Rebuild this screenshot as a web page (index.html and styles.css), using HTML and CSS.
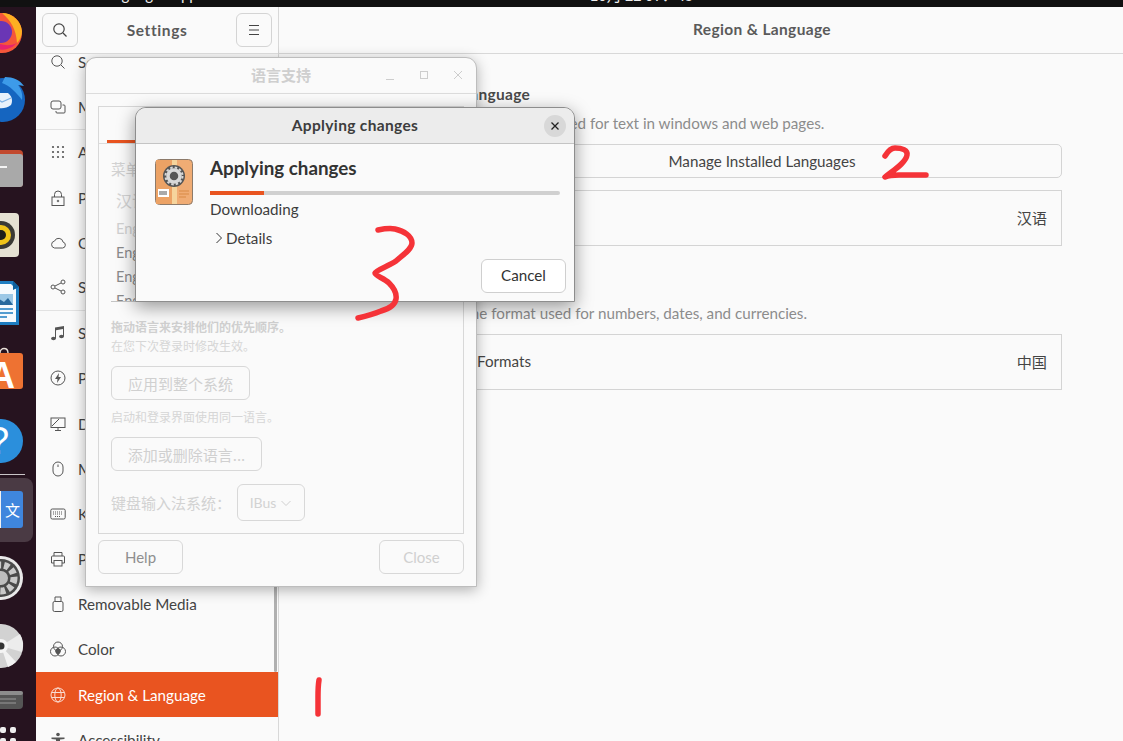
FILE: index.html
```html
<!DOCTYPE html>
<html>
<head>
  <meta charset="utf-8" />
  <title>Region &amp; Language</title>
  <link rel="stylesheet" href="styles.css">
</head>
<body>
  <div class="topbar">
    <div class="topbar-text">
      <span class="app-name">Language Support</span>
      <span class="clock">10月 22 07：45</span>
    </div>
  </div>
  <div class="desktop">
    <!-- dock, cropped on the left like the capture -->
    <nav class="dock">
      <svg class="dock-icon" width="36" height="68" viewBox="0 0 36 68">
        <circle cx="2" cy="34" r="20" fill="#f5563a"/>
        <path d="M2 14a20 20 0 0 1 20 18c0 5-2 9-5 12-1-14-6-22-15-30z" fill="#fdb022"/>
        <circle cx="1" cy="33" r="11" fill="#6a36b5"/>
        <path d="M-3 50a20 20 0 0 0 20-6c-6 3-13 3-20 0z" fill="#e8236e"/>
      </svg>
      <svg class="dock-icon" width="36" height="68" viewBox="0 0 36 68">
        <circle cx="3" cy="33" r="22" fill="#1565c0"/>
        <path d="M5 10c8 0 15 3 19 9l-6-1c3 4 5 9 4 15-6-8-12-14-20-17z" fill="#3d9be9"/>
        <path d="M-6 26h14c4 3 5 8 3 12-5 4-11 4-17 2z" fill="#e8f1fb"/>
        <path d="M-6 30l8 5 9-4" fill="none" stroke="#7fb2e5" stroke-width="1.2"/>
      </svg>
      <svg class="dock-icon" width="36" height="68" viewBox="0 0 36 68">
        <rect x="-20" y="15" width="43" height="37" rx="4" fill="#c2492e"/>
        <rect x="-20" y="19" width="43" height="33" rx="3" fill="#a9a9a9"/>
        <rect x="0" y="31" width="7" height="2" fill="#f4f4f4"/>
      </svg>
      <svg class="dock-icon" width="36" height="68" viewBox="0 0 36 68">
        <rect x="-20" y="10" width="39" height="44" rx="4" fill="#e5e1d3"/>
        <circle cx="1" cy="32" r="14" fill="#3a3a36"/>
        <circle cx="1" cy="32" r="10" fill="#f0c419"/>
        <circle cx="1" cy="32" r="5" fill="#1c1c1a"/>
      </svg>
      <svg class="dock-icon" width="36" height="68" viewBox="0 0 36 68">
        <path d="M-10 10h23l6 6v38h-29z" fill="#1d7dc1"/>
        <path d="M-10 13h21l5 5v33h-26z" fill="#f6fafd"/>
        <path d="M13 10l6 6-6 3z" fill="#0d5f9c"/>
        <rect x="-8" y="23" width="21" height="11" fill="#9cc8e6"/>
        <path d="M-8 34l7-6 5 3 4-4 5 7z" fill="#27699d"/>
        <path d="M-8 38h21M-8 42h21M-8 46h15" stroke="#1d7dc1" stroke-width="1.6"/>
      </svg>
      <svg class="dock-icon" width="36" height="68" viewBox="0 0 36 68">
        <path d="M0 14c0-6 8-6 8 0" fill="none" stroke="#e8dfd8" stroke-width="1.4"/>
        <rect x="-20" y="14" width="43" height="36" rx="3" fill="#ee7232"/>
        <text x="-11" y="49" class="store-letter">A</text>
      </svg>
      <svg class="dock-icon" width="36" height="68" viewBox="0 0 36 68">
        <circle cx="1" cy="34" r="22" fill="#2b8fdc"/>
        <text x="-12" y="47" class="help-letter">?</text>
      </svg>
      <div class="dock-sep"></div>
      <div class="dock-active">
        <svg width="36" height="64" viewBox="0 0 36 64">
          <rect x="-20" y="13" width="43" height="37" rx="3" fill="#3f86dd"/>
          <rect x="-20" y="13" width="21" height="37" fill="#f2f2f2"/>
          <text x="5" y="38" class="lang-letter">文</text>
        </svg>
      </div>
      <svg class="dock-icon" width="36" height="68" viewBox="0 0 36 68">
        <circle cx="1" cy="34" r="22" fill="#e9e9e9"/>
        <circle cx="1" cy="34" r="19" fill="#4a4a4a"/>
        <circle cx="1" cy="34" r="13" fill="none" stroke="#c9c9c9" stroke-width="7" stroke-dasharray="5 3"/>
        <circle cx="1" cy="34" r="7" fill="#bdbdbd"/>
      </svg>
      <svg class="dock-icon" width="36" height="68" viewBox="0 0 36 68">
        <circle cx="1" cy="34" r="22" fill="#d2d2d2"/>
        <path d="M1 34L20 22A22 22 0 0 1 22 40z" fill="#ececec"/>
        <path d="M1 34L8 55A22 22 0 0 0 16 50z" fill="#f2f2f2"/>
        <circle cx="1" cy="34" r="7" fill="#f4f4f4"/>
        <circle cx="1" cy="34" r="3.5" fill="#333"/>
      </svg>
      <svg class="dock-icon" width="36" height="36" viewBox="0 0 36 36">
        <rect x="-20" y="11" width="43" height="18" rx="4" fill="#555"/>
        <rect x="-20" y="11" width="43" height="4" rx="2" fill="#8c8c8c"/>
        <path d="M0 19h16M0 23h16" stroke="#9a9a9a"/>
      </svg>
      <svg class="dock-icon" width="36" height="30" viewBox="0 0 36 30">
        <rect x="0" y="11" width="6" height="6" rx="2" fill="#eee"/>
        <rect x="10" y="11" width="6" height="6" rx="2" fill="#eee"/>
        <rect x="0" y="22" width="6" height="6" rx="2" fill="#eee"/>
        <rect x="10" y="22" width="6" height="6" rx="2" fill="#eee"/>
      </svg>
    </nav>

    <div class="settings">
      <aside class="sidebar">
        <header class="side-header">
          <button class="head-btn">
            <svg width="16" height="16" viewBox="0 0 16 16"><circle cx="7" cy="7" r="5.2"/><path d="M11 11l3.5 3.5"/></svg>
          </button>
          <span class="side-title">Settings</span>
          <button class="head-btn">
            <svg width="16" height="16" viewBox="0 0 16 16"><path d="M3 3.5h10M3 8h10M3 12.5h10"/></svg>
          </button>
        </header>
        <ul class="side-list">
          <li class="side-row"><svg viewBox="0 0 16 16"><circle cx="7" cy="7" r="5.2"/><path d="M11 11l3.5 3.5"/></svg>Search</li>
          <li class="side-row sep"><svg viewBox="0 0 16 16"><rect x="1" y="2" width="10" height="8" rx="2"/><path d="M12.5 6h1.500a1 1 0 0 1 1 1v6a1 1 0 0 1-1 1H7a1 1 0 0 1-1-1v-1"/></svg>Multitasking</li>
          <li class="side-row"><svg viewBox="0 0 16 16" class="solid"><circle cx="3" cy="3" r="1.1"/><circle cx="8" cy="3" r="1.1"/><circle cx="13" cy="3" r="1.1"/><circle cx="3" cy="8" r="1.1"/><circle cx="8" cy="8" r="1.1"/><circle cx="13" cy="8" r="1.1"/><circle cx="3" cy="13" r="1.1"/><circle cx="8" cy="13" r="1.1"/><circle cx="13" cy="13" r="1.1"/></svg>Appearance</li>
          <li class="side-row"><svg viewBox="0 0 16 16"><rect x="2" y="7" width="12" height="8.5"/><path d="M4.500 7V4.500a3.500 3.500 0 0 1 7 0V7"/><circle cx="8" cy="11" r=".8"/></svg>Privacy</li>
          <li class="side-row"><svg viewBox="0 0 16 16"><path d="M4.500 13h8a3 3 0 0 0 .6-5.900 4.500 4.500 0 0 0-8.600-1A3.500 3.500 0 0 0 4.500 13z"/></svg>Online Accounts</li>
          <li class="side-row sep"><svg viewBox="0 0 16 16"><circle cx="3" cy="8" r="2"/><circle cx="13" cy="3" r="2"/><circle cx="13" cy="13" r="2"/><path d="M5 7l6-3M5 9l6 3"/></svg>Sharing</li>
          <li class="side-row"><svg viewBox="0 0 16 16" class="solid"><path d="M5 2.500l9-1.500v10.500h-1V4l-7 1.200V13.500H5z"/><ellipse cx="3.500" cy="13.500" rx="2.400" ry="1.800"/><ellipse cx="11.500" cy="11.500" rx="2.400" ry="1.800"/></svg>Sound</li>
          <li class="side-row"><svg viewBox="0 0 16 16"><circle cx="8" cy="8" r="7"/><path class="fill" d="M9 3L5 9h2.500L7 13l4-6H8.500z"/></svg>Power</li>
          <li class="side-row"><svg viewBox="0 0 16 16"><rect x="1" y="2" width="14" height="9.500"/><path d="M8 11.500V14M5 14.500h6M2 10l7-7"/></svg>Displays</li>
          <li class="side-row"><svg viewBox="0 0 16 16"><rect x="3" y="1" width="10" height="14" rx="5"/><path d="M8 3.500v2.500"/></svg>Mouse &amp; Touchpad</li>
          <li class="side-row"><svg viewBox="0 0 16 16"><rect x=".8" y="3" width="14.400" height="10" rx="1.500"/><path d="M3 6h10M3 8h10M5 10.500h6" stroke-dasharray="1 1"/></svg>Keyboard</li>
          <li class="side-row"><svg viewBox="0 0 16 16"><path d="M4 5V1.500h8V5M4 12H1.500V6a1 1 0 0 1 1-1h11a1 1 0 0 1 1 1v6H12"/><rect x="4" y="9.500" width="8" height="5.500"/></svg>Printers</li>
          <li class="side-row"><svg viewBox="0 0 16 16"><rect x="3" y="5.500" width="10" height="10" rx="1.500"/><path d="M5 5.500V1h6v4.500M7 3h.1M9 3h.1"/></svg>Removable Media</li>
          <li class="side-row"><svg viewBox="0 0 16 16"><circle cx="8" cy="5.500" r="4.500"/><circle cx="5" cy="10.500" r="4.500"/><circle cx="11" cy="10.500" r="4.500"/><path class="fill" d="M8 7a4.500 4.500 0 0 1 3 3 4.500 4.500 0 0 1-3 3.500 4.500 4.500 0 0 1-3-3.500 4.500 4.500 0 0 1 3-3z"/></svg>Color</li>
          <li class="side-row active"><svg viewBox="0 0 16 16"><circle cx="8" cy="8" r="7"/><ellipse cx="8" cy="8" rx="3.200" ry="7"/><path d="M1.500 5.500h13M1.500 10.500h13"/></svg>Region &amp; Language</li>
          <li class="side-row"><svg viewBox="0 0 16 16" class="solid"><circle cx="8" cy="2.500" r="1.800"/><path d="M1.500 5.500h13v1.400l-4.500.6V11l1.500 4.500H10L8 11.500 6 15.500H4.500L6 11V7.500l-4.500-.6z"/></svg>Accessibility</li>
        </ul>
        <div class="side-scroll"></div>
      </aside>

      <main class="panel">
        <header class="panel-header">Region &amp; Language</header>
        <div class="panel-body">
          <h2 class="section-title">Language</h2>
          <p class="section-desc">The language used for text in windows and web pages.</p>
          <div class="manage-btn">Manage Installed Languages</div>
          <div class="pref-row"><span>Language</span><span class="cjk">汉语</span></div>
          <h2 class="section-title second">Formats</h2>
          <p class="section-desc">The format used for numbers, dates, and currencies.</p>
          <div class="pref-row"><span>Formats</span><span class="cjk">中国</span></div>
        </div>
      </main>
    </div>

    <!-- language support window, dimmed because the dialog is modal -->
    <section class="lang-window">
      <header class="lang-titlebar">
        <span class="lang-title cjk">语言支持</span>
        <div class="win-controls">
          <svg width="12" height="12" viewBox="0 0 12 12"><path d="M2 10.500h8"/></svg>
          <svg width="12" height="12" viewBox="0 0 12 12"><rect x="2.500" y="2.500" width="7" height="7"/></svg>
          <svg width="12" height="12" viewBox="0 0 12 12"><path d="M2 2l8 8M10 2l-8 8"/></svg>
        </div>
      </header>
      <div class="lang-body">
        <div class="notebook">
          <div class="tabs"><span class="tab cjk">语言</span></div>
          <div class="tab-page cjk">
            <p class="menu-label">菜单和窗口的语言：</p>
            <ul class="lang-list">
              <li class="lang-first">汉语（中国）</li>
              <li class="pale">English</li>
              <li>English (Australia)</li>
              <li>English (Canada)</li>
              <li>English (United Kingdom)</li>
            </ul>
            <p class="hint strong">拖动语言来安排他们的优先顺序。</p>
            <p class="hint">在您下次登录时修改生效。</p>
            <div class="dim-btn wide">应用到整个系统</div>
            <p class="hint after">启动和登录界面使用同一语言。</p>
            <div class="dim-btn wider">添加或删除语言...</div>
            <div class="ime-row">
              <span>键盘输入法系统：</span>
              <div class="ime-select">IBus
                <svg width="12" height="12" viewBox="0 0 12 12"><path d="M1.500 4l4.500 4.500L10.500 4"/></svg>
              </div>
            </div>
          </div>
        </div>
        <div class="lang-actions">
          <div class="dim-btn action help">Help</div>
          <div class="dim-btn action">Close</div>
        </div>
      </div>
    </section>

    <!-- progress dialog -->
    <section class="apply-dialog">
      <header class="apply-titlebar">
        <span>Applying changes</span>
        <span class="apply-close">
          <svg width="10" height="10" viewBox="0 0 10 10"><path d="M1.500 1.500l7 7M8.500 1.500l-7 7"/></svg>
        </span>
      </header>
      <div class="apply-body">
        <svg class="pkg-icon" width="38" height="46" viewBox="0 0 38 46">
          <rect x=".5" y=".5" width="37" height="45" rx="4" fill="#f0ac74" stroke="#8c7a6a"/>
          <rect x="1" y="1" width="18" height="44" fill="#eca265"/>
          <rect x="17" y="1" width="5" height="44" fill="#f6d49c"/>
          <circle cx="19" cy="17" r="11" fill="#555"/>
          <circle cx="19" cy="17" r="6" fill="none" stroke="#d8d8d8" stroke-width="3.500"/>
          <circle cx="19" cy="17" r="8.500" fill="none" stroke="#d8d8d8" stroke-width="2" stroke-dasharray="2.500 2"/>
          <rect x="3" y="30" width="11" height="8" fill="#fff"/>
          <path d="M5 32v4M7 32v4M9 32v4M11 32v4" stroke="#555"/>
          <path d="M24 32h10M24 35h10M24 38h7" stroke="#d98a45"/>
        </svg>
        <div class="apply-main">
          <h1 class="apply-heading">Applying changes</h1>
          <div class="progress"><div class="progress-fill"></div></div>
          <p class="apply-status">Downloading</p>
          <div class="details">
            <svg width="8" height="12" viewBox="0 0 8 12"><path d="M1.500 1l5 5-5 5"/></svg>
            Details
          </div>
        </div>
      </div>
      <div class="apply-actions"><button class="cancel-btn">Cancel</button></div>
    </section>

    <!-- hand drawn red numbers -->
    <svg class="scribble" width="1123" height="741" viewBox="0 0 1123 741">
      <path d="M319 680c-1 6-1 10-1 17 0 6 0 11 0 17"/>
      <path d="M885 156c3-5 6-8 10-8 7 0 13 2 12 7-1 8-15 16-22 22 4-2 9-2 14-2l27 0"/>
      <path d="M378 230c5-1 12-2 17-1 9 2 17 7 17 14 0 6-9 12-16 18-7 5-20 9-21 12 0 3 9 5 14 10 5 5 8 10 7 16-1 6-8 10-15 12-7 3-14 5-23 7"/>
    </svg>
  </div>
</body>
</html>
```

FILE: styles.css
```css
html, body {
  margin: 0;
  padding: 0;
  width: 1123px;
  height: 741px;
  overflow: hidden;
}
body {
  font-family: "Lato", "Noto Sans CJK SC", sans-serif;
  font-size: 15.2px;
  color: #3d3d3d;
  background: #fafafa;
  display: flex;
  flex-direction: column;
}
p, h1, h2, ul {
  margin: 0;
  padding: 0;
  list-style: none;
}
.cjk {
  font-family: "Noto Sans CJK SC", sans-serif;
}

/* top bar, only the descenders are in the capture */
.topbar {
  height: 7px;
  flex: none;
  background: #111;
  overflow: hidden;
}
.topbar-text {
  display: flex;
  margin-top: -15px;
  color: #eee;
  font-size: 15px;
  line-height: 18px;
  white-space: nowrap;
}
.app-name {
  width: 590px;
  padding-left: 98px;
  box-sizing: border-box;
}
.clock {
  padding-top: 1px;
  font-family: "Noto Sans CJK SC", sans-serif;
}

.desktop {
  flex: 1;
  display: flex;
  position: relative;
  min-height: 0;
  overflow: hidden;
}

/* dock */
.dock {
  flex: none;
  width: 36px;
  background: #26131f;
  display: flex;
  flex-direction: column;
  margin-top: -8px;
  overflow: hidden;
}
.dock-icon {
  flex: none;
  display: block;
}
.dock-sep {
  flex: none;
  width: 25px;
  height: 1px;
  margin: -1px 0 3px;
  background: #c9c4c7;
}
.dock-active {
  flex: none;
  width: 33px;
  height: 64px;
  border-radius: 0 8px 8px 0;
  background: #4a3a44;
  overflow: hidden;
  margin-bottom: 2px;
}
.store-letter {
  font: bold 36px "Liberation Sans", sans-serif;
  fill: #fff;
}
.help-letter {
  font: 38px "Liberation Sans", sans-serif;
  fill: #fff;
}
.lang-letter {
  font: 15px "Noto Sans CJK SC", sans-serif;
  fill: #fff;
}

/* settings window */
.settings {
  flex: 1;
  display: flex;
  min-width: 0;
}
.sidebar {
  flex: none;
  width: 242px;
  border-right: 1px solid #d8d8d8;
  overflow: hidden;
  position: relative;
}
.side-header {
  height: 47px;
  box-sizing: border-box;
  border-bottom: 1px solid #d8d8d8;
  background: #fafafa;
  padding: 6px 6px 6px;
  display: flex;
  align-items: center;
  justify-content: space-between;
  position: relative;
  z-index: 1;
}
.side-title {
  font-weight: bold;
  font-size: 15.5px;
  letter-spacing: 0.6px;
  color: #5a5a5a;
  margin-top: -1px;
}
.head-btn {
  width: 36px;
  height: 34px;
  padding: 0;
  background: #fafafa;
  border: 1px solid #d4d4d4;
  border-radius: 6px;
  display: flex;
  align-items: center;
  justify-content: center;
}
.head-btn svg {
  fill: none;
  stroke: #444;
  stroke-width: 1.2;
}
.side-list {
  margin-top: -14.6px;
}
.side-row {
  height: 45.2px;
  box-sizing: border-box;
  padding-left: 14px;
  display: flex;
  align-items: center;
  gap: 12px;
  color: #444;
  white-space: nowrap;
}
.side-row.sep {
  border-bottom: 1px solid #e2e2e2;
}
.side-row svg {
  flex: none;
  width: 16px;
  height: 16px;
  fill: none;
  stroke: #555;
  stroke-width: 1;
}
.side-row svg.solid {
  fill: #555;
  stroke: none;
}
.side-row svg .fill {
  fill: #555;
  stroke: none;
}
.side-row.active {
  background: #e95420;
  color: #fff;
}
.side-row.active svg {
  stroke: #fff;
  opacity: 0.8;
}
.side-scroll {
  position: absolute;
  right: 1px;
  bottom: 69px;
  width: 3px;
  height: 220px;
  background: #b0b0b0;
  border-radius: 2px;
}

/* right panel, runs past the edge of the capture */
.panel {
  flex: none;
  width: 966px;
}
.panel-header {
  height: 47px;
  box-sizing: border-box;
  padding-bottom: 2px;
  border-bottom: 1px solid #d8d8d8;
  display: flex;
  align-items: center;
  justify-content: center;
  font-weight: bold;
  font-size: 15.5px;
  letter-spacing: 0.35px;
  color: #5a5a5a;
}
.panel-body {
  width: 600px;
  margin: 0 auto;
  padding-top: 30px;
}
.section-title {
  font-size: 15.5px;
  line-height: 20px;
  letter-spacing: 0.3px;
  font-weight: bold;
  color: #4a4a4a;
}
.section-title.second {
  margin-top: 28px;
}
.section-desc {
  margin-top: 9px;
  line-height: 20px;
  color: #8c8c8c;
}
.manage-btn {
  margin-top: 11px;
  height: 34px;
  box-sizing: border-box;
  padding-bottom: 1px;
  border: 1px solid #d4d4d4;
  border-radius: 5px;
  display: flex;
  align-items: center;
  justify-content: center;
  color: #444;
}
.pref-row {
  margin-top: 12px;
  height: 56px;
  box-sizing: border-box;
  border: 1px solid #d4d4d4;
  padding: 0 14px 3px;
  display: flex;
  align-items: center;
  justify-content: space-between;
  color: #444;
}
.section-desc + .pref-row {
  margin-top: 11px;
}

/* language support window */
.lang-window {
  position: absolute;
  left: 85px;
  top: 50px;
  width: 392px;
  height: 530px;
  box-sizing: border-box;
  background: #fafafa;
  border: 1px solid #bdbdbd;
  border-radius: 11px 11px 0 0;
  box-shadow: 0 3px 14px rgba(0, 0, 0, 0.3);
  display: flex;
  flex-direction: column;
}
.lang-titlebar {
  height: 35px;
  flex: none;
  border-bottom: 1px solid #dcdcdc;
  display: flex;
  align-items: center;
  justify-content: center;
  position: relative;
}
.lang-title {
  font-size: 15px;
  font-weight: bold;
  color: #cfcfcf;
  margin-top: -3px;
}
.win-controls {
  position: absolute;
  right: 12px;
  top: 11px;
  display: flex;
  gap: 22px;
}
.win-controls svg {
  fill: none;
  stroke: #cdcdcd;
}
.lang-body {
  flex: 1;
  padding: 12px 12px 12px;
  display: flex;
  flex-direction: column;
  color: #d2d2d2;
}
.notebook {
  height: 428px;
  flex: none;
  box-sizing: border-box;
  border: 1px solid #d8d8d8;
}
.tabs {
  height: 37px;
  box-sizing: border-box;
  border-bottom: 1px solid #dcdcdc;
  padding: 0 8px;
}
.tab {
  display: block;
  width: 90px;
  height: 36px;
  box-sizing: border-box;
  text-align: center;
  line-height: 36px;
  font-size: 15px;
  border-bottom: 3px solid #e95420;
  color: #cfcfcf;
}
.tab-page {
  padding: 13px 12px 0;
  font-size: 12px;
  font-family: "Noto Sans CJK SC", sans-serif;
}
.menu-label {
  font-size: 14.5px;
  line-height: 24px;
}
.lang-list {
  margin: 3px 0 0;
  border-bottom: 1px solid #c4c4c4;
  height: 117px;
  overflow: hidden;
  font-family: "Lato", sans-serif;
  font-size: 14.5px;
  color: #8a8a8a;
}
.lang-list li {
  height: 24px;
  line-height: 24px;
  padding-left: 5px;
}
.lang-list li.pale {
  color: #d0d0d0;
}
.lang-list li.lang-first {
  height: 33px;
  line-height: 33px;
  font-family: "Noto Sans CJK SC", sans-serif;
  font-size: 16px;
  color: #d4d4d4;
}
.hint {
  line-height: 19px;
  color: #d6d6d6;
}
.hint.strong {
  margin-top: 15px;
  font-weight: bold;
  color: #d0d0d0;
}
.hint.after {
  margin-top: 7px;
}
.dim-btn {
  height: 34px;
  box-sizing: border-box;
  border: 1px solid #d8d8d8;
  border-radius: 6px;
  display: flex;
  align-items: center;
  justify-content: center;
  font-size: 15px;
  color: #d0d0d0;
}
.dim-btn.wide {
  width: 139px;
  margin-top: 11px;
}
.dim-btn.wider {
  width: 151px;
  margin-top: 11px;
}
.ime-row {
  margin-top: 13px;
  display: flex;
  align-items: center;
  gap: 6px;
  font-size: 15px;
}
.ime-select {
  width: 68px;
  height: 37px;
  box-sizing: border-box;
  border: 1px solid #d8d8d8;
  border-radius: 6px;
  display: flex;
  align-items: center;
  justify-content: center;
  gap: 4px;
  font-family: "Lato", sans-serif;
  font-size: 14px;
}
.ime-select svg {
  fill: none;
  stroke: #d0d0d0;
}
.lang-actions {
  margin-top: 6px;
  display: flex;
  justify-content: space-between;
}
.dim-btn.action {
  width: 85px;
  font-family: "Lato", sans-serif;
  font-size: 15px;
}
.dim-btn.help {
  color: #8f8f8f;
}

/* applying changes dialog */
.apply-dialog {
  position: absolute;
  left: 135px;
  top: 100px;
  width: 440px;
  height: 195px;
  box-sizing: border-box;
  background: #fafafa;
  border: 1px solid #8d8d8d;
  border-radius: 11px 11px 0 0;
  box-shadow: 0 5px 18px rgba(0, 0, 0, 0.4);
  display: flex;
  flex-direction: column;
}
.apply-titlebar {
  height: 36px;
  flex: none;
  box-sizing: border-box;
  padding-bottom: 2px;
  background: #ececec;
  border-bottom: 1px solid #c4c4c4;
  border-radius: 10px 10px 0 0;
  display: flex;
  align-items: center;
  justify-content: center;
  font-weight: bold;
  font-size: 15.5px;
  letter-spacing: 0.35px;
  color: #3d3d3d;
  position: relative;
}
.apply-close {
  position: absolute;
  right: 8px;
  top: 7px;
  width: 22px;
  height: 22px;
  border-radius: 50%;
  background: #d8d8d8;
  display: flex;
  align-items: center;
  justify-content: center;
}
.apply-close svg {
  fill: none;
  stroke: #222;
  stroke-width: 1.3;
}
.apply-body {
  display: flex;
  padding: 15px 14px 0 19px;
  gap: 17px;
}
.pkg-icon {
  flex: none;
}
.apply-main {
  flex: 1;
}
.apply-heading {
  font-size: 18.8px;
  line-height: 22px;
  margin-top: -2px;
  font-weight: bold;
  color: #333;
}
.progress {
  margin-top: 12px;
  height: 4px;
  border-radius: 2px;
  background: #d0d0d0;
}
.progress-fill {
  width: 54px;
  height: 4px;
  background: #e95420;
}
.apply-status {
  margin-top: 4px;
  line-height: 20px;
}
.details {
  margin-top: 9px;
  margin-left: 5px;
  line-height: 20px;
  display: flex;
  align-items: center;
  gap: 3px;
}
.details svg {
  fill: none;
  stroke: #333;
}
.apply-actions {
  margin-top: auto;
  padding: 0 8px 8px;
  display: flex;
  justify-content: flex-end;
}
.cancel-btn {
  width: 85px;
  height: 34px;
  background: #fff;
  border: 1px solid #cfcfcf;
  border-radius: 6px;
  padding-bottom: 4px;
  font: inherit;
  color: #333;
}

/* red annotations */
.scribble {
  position: absolute;
  left: 0;
  top: -7px;
  fill: none;
  stroke: #f53338;
  stroke-width: 5.5;
  stroke-linecap: round;
  stroke-linejoin: round;
  pointer-events: none;
}
```
